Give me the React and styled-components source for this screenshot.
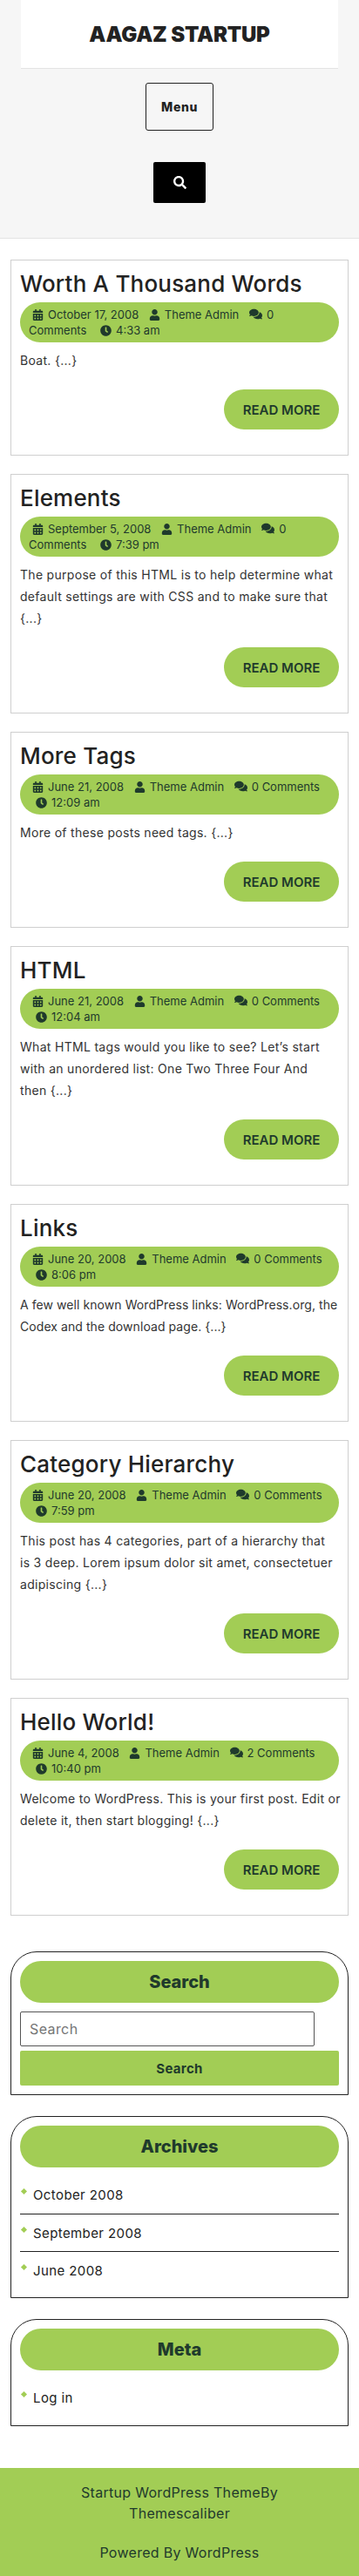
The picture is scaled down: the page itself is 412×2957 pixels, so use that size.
import React from 'react'
import styled, { createGlobalStyle } from 'styled-components'
import { FaCalendarAlt, FaUser, FaComments, FaClock, FaSearch } from 'react-icons/fa'

const GREEN = '#a2cd55'
const DARK = '#1f3a2c'
const INK = '#222222'

const GlobalStyle = createGlobalStyle`
  * { box-sizing: border-box; }
  html, body { margin: 0; padding: 0; background: #fff; }
  body {
    font-family: Inter, "Open Sans", "Liberation Sans", sans-serif;
    color: ${INK};
  }
`

const TopBar = styled.header`
  background: #f6f6f6;
  border-bottom: 1px solid #e4e4e4;
  height: 274px;
  display: flex;
  flex-direction: column;
  align-items: center;
`

const Brand = styled.div`
  width: 364px;
  height: 79px;
  background: #fff;
  border-bottom: 1px solid #e4e4e4;
  display: flex;
  align-items: center;
  justify-content: center;
  font-size: 24px;
  font-weight: 900;
  letter-spacing: -0.2px;
  color: ${INK};
`

const MenuButton = styled.button`
  margin-top: 16px;
  width: 78px;
  height: 55px;
  background: transparent;
  border: 1px solid #222;
  border-radius: 3px;
  font: 800 14px Inter, sans-serif;
  letter-spacing: 0.6px;
  color: ${INK};
`

const SearchToggle = styled.button`
  margin-top: 36px;
  width: 60px;
  height: 47px;
  background: #000;
  border: 0;
  border-radius: 2px;
  color: #fff;
  font-size: 15px;
  display: flex;
  align-items: center;
  justify-content: center;
`

const Main = styled.main`
  padding: 24px 12px;
  display: flex;
  flex-direction: column;
`

const Posts = styled.div`
  margin-bottom: 20px;
`

const Post = styled.article`
  border: 1px solid #cfcfcf;
  padding: 10px 10px 29px;
  margin-bottom: 21px;
`

const PostTitle = styled.h2`
  margin: 0 0 4px;
  font-size: 26px;
  line-height: 34px;
  font-weight: 500;
  letter-spacing: 0.2px;
  color: ${INK};
`

const Meta = styled.div`
  background: ${GREEN};
  border-radius: 30px;
  padding: 5px 10px;
  font-size: 13px;
  line-height: 18px;
  color: ${DARK};
`

const MetaItem = styled.span`
  margin: 0 4px 0 ${p => (p.$last ? 8 : 4)}px;
  & svg {
    font-size: ${p => (p.$wide ? 15 : 13)}px;
    margin-right: 5px;
    vertical-align: -2px;
  }
`

const Excerpt = styled.p`
  margin: 8px 0 0;
  font-size: 14px;
  line-height: 25px;
  letter-spacing: ${p => (p.$tight ? 0.07 : 0.3)}px;
  color: #333;
`

const ExcerptLine = styled.span`
  display: block;
  white-space: nowrap;
`

const MoreRow = styled.div`
  display: flex;
  justify-content: flex-end;
  margin-top: 21px;
`

const ReadMore = styled.a`
  width: 132px;
  height: 46px;
  border-radius: 30px;
  background: ${GREEN};
  color: ${DARK};
  font-size: 15px;
  font-weight: 600;
  display: flex;
  align-items: center;
  justify-content: center;
`

const Widget = styled.section`
  border: 1px solid #222;
  border-radius: 30px 30px 0 0;
  padding: 10px;
  margin-bottom: 24px;
`

const WidgetTitle = styled.h3`
  margin: 0;
  height: 48px;
  border-radius: 30px;
  background: ${GREEN};
  color: ${DARK};
  font-size: 20px;
  font-weight: 800;
  display: flex;
  align-items: center;
  justify-content: center;
`

const SearchInput = styled.input`
  display: block;
  margin-top: 10px;
  width: 338px;
  height: 40px;
  border: 1px solid #555;
  border-radius: 2px;
  padding: 0 10px;
  font: 400 16px Inter, sans-serif;
  letter-spacing: 0.4px;
  &::placeholder { color: #757575; opacity: 1; }
`

const SearchSubmit = styled.button`
  display: block;
  margin-top: 5px;
  width: 100%;
  height: 40px;
  border: 0;
  border-radius: 2px;
  background: ${GREEN};
  color: ${DARK};
  font: 700 15px Inter, sans-serif;
  letter-spacing: 0.3px;
`

const LinkList = styled.ul`
  list-style: none;
  margin: 0;
  padding: 10px 0 0;
`

const LinkItem = styled.li`
  position: relative;
  height: 43px;
  padding-left: 15px;
  display: flex;
  align-items: center;
  font-size: 15px;
  letter-spacing: 0.4px;
  color: ${INK};
  & + & { border-top: 1px solid #222; }
  &::before {
    content: '';
    position: absolute;
    left: 2px;
    top: 15px;
    width: 5px;
    height: 5px;
    background: ${GREEN};
    transform: rotate(45deg);
  }
`

const Footer = styled.footer`
  background: ${GREEN};
  height: 126px;
  padding: 16px 40px 0;
  text-align: center;
  color: ${DARK};
  font-size: 16px;
  line-height: 24px;
  letter-spacing: 0.3px;
`

const FooterLine = styled.p`
  margin: 0 0 21px;
`

const posts = [
  { title: 'Worth A Thousand Words', date: 'October 17, 2008', comments: 0, time: '4:33 am', lines: ['Boat. {...}'] },
  { title: 'Elements', date: 'September 5, 2008', comments: 0, time: '7:39 pm', lines: ['The purpose of this HTML is to help determine what', 'default settings are with CSS and to make sure that', '{...}'] },
  { title: 'More Tags', date: 'June 21, 2008', comments: 0, time: '12:09 am', lines: ['More of these posts need tags. {...}'] },
  { title: 'HTML', date: 'June 21, 2008', comments: 0, time: '12:04 am', lines: ['What HTML tags would you like to see? Let\u2019s start', 'with an unordered list: One Two Three Four And', 'then {...}'] },
  { title: 'Links', date: 'June 20, 2008', comments: 0, time: '8:06 pm', tight: true, lines: ['A few well known WordPress links: WordPress.org, the', 'Codex and the download page. {...}'] },
  { title: 'Category Hierarchy', date: 'June 20, 2008', comments: 0, time: '7:59 pm', lines: ['This post has 4 categories, part of a hierarchy that', 'is 3 deep. Lorem ipsum dolor sit amet, consectetuer', 'adipiscing {...}'] },
  { title: 'Hello World!', date: 'June 4, 2008', comments: 2, time: '10:40 pm', lines: ['Welcome to WordPress. This is your first post. Edit or', 'delete it, then start blogging! {...}'] },
]

const App = () => (
  <>
    <GlobalStyle />
    <TopBar>
      <Brand>AAGAZ STARTUP</Brand>
      <MenuButton>Menu</MenuButton>
      <SearchToggle aria-label="Search"><FaSearch /></SearchToggle>
    </TopBar>
    <Main>
      <Posts>
        {posts.map(post => (
          <Post key={post.title}>
            <PostTitle>{post.title}</PostTitle>
            <Meta>
              <MetaItem><FaCalendarAlt />{post.date}</MetaItem>{' '}
              <MetaItem><FaUser />Theme Admin</MetaItem>{' '}
              <MetaItem $wide><FaComments />{post.comments} Comments</MetaItem>{' '}
              <MetaItem $last><FaClock />{post.time}</MetaItem>
            </Meta>
            <Excerpt $tight={post.tight}>
              {post.lines.map(line => <ExcerptLine key={line}>{line}</ExcerptLine>)}
            </Excerpt>
            <MoreRow><ReadMore>READ MORE</ReadMore></MoreRow>
          </Post>
        ))}
      </Posts>
      <Widget>
        <WidgetTitle>Search</WidgetTitle>
        <SearchInput placeholder="Search" />
        <SearchSubmit>Search</SearchSubmit>
      </Widget>
      <Widget>
        <WidgetTitle>Archives</WidgetTitle>
        <LinkList>
          <LinkItem>October 2008</LinkItem>
          <LinkItem>September 2008</LinkItem>
          <LinkItem>June 2008</LinkItem>
        </LinkList>
      </Widget>
      <Widget>
        <WidgetTitle>Meta</WidgetTitle>
        <LinkList>
          <LinkItem>Log in</LinkItem>
        </LinkList>
      </Widget>
    </Main>
    <Footer>
      <FooterLine>Startup WordPress ThemeBy Themescaliber</FooterLine>
      <FooterLine>Powered By WordPress</FooterLine>
    </Footer>
  </>
)

export default App
